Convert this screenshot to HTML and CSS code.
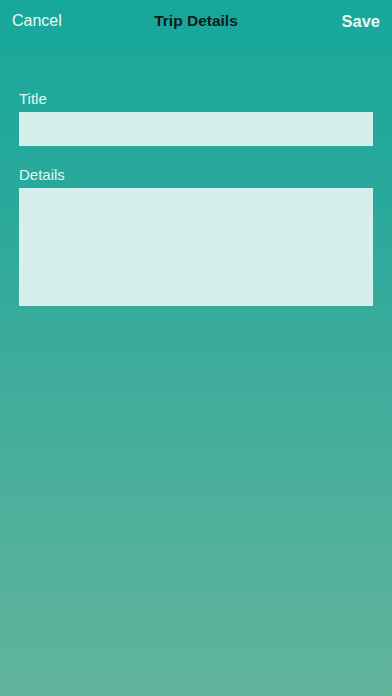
FILE: index.html
```html
<!DOCTYPE html>
<html>
<head>
<meta charset="utf-8">
<link rel="stylesheet" href="styles.css">
</head>
<body>
<div class="screen">
  <div class="nav">
    <span class="nav-btn cancel">Cancel</span>
    <span class="nav-title">Trip Details</span>
    <span class="nav-btn save">Save</span>
  </div>
  <div class="form">
    <label class="label">Title</label>
    <div class="field field-title"></div>
    <label class="label label-details">Details</label>
    <div class="field field-details"></div>
  </div>
</div>
</body>
</html>
```
FILE: styles.css
```css
html, body {
  margin: 0;
  padding: 0;
}
body {
  font-family: "Liberation Sans", Arial, sans-serif;
}
.screen {
  width: 392px;
  height: 696px;
  background: linear-gradient(to bottom, #16a89b 0%, #2aa99b 30%, #48ae9c 65%, #62b49b 100%);
  display: flex;
  flex-direction: column;
}
.nav {
  display: grid;
  grid-template-columns: 1fr auto 1fr;
  align-items: center;
  padding: 11px 12px 0 12px;
  height: 20px;
  font-size: 16px;
  line-height: 20px;
}
.nav-btn {
  color: #e9f8f5;
}
.cancel {
  justify-self: start;
}
.save {
  justify-self: end;
  font-weight: bold;
  font-size: 16.5px;
}
.nav-title {
  color: #0e1a19;
  font-weight: bold;
  font-size: 15.5px;
}
.form {
  display: flex;
  flex-direction: column;
  padding: 59px 19px 0 19px;
}
.label {
  color: #e2f6f2;
  font-size: 15px;
  line-height: 18px;
  margin-bottom: 4px;
}
.label-details {
  margin-top: 20px;
}
.field {
  background: #d6efec;
}
.field-title {
  height: 34px;
}
.field-details {
  height: 118px;
}
```
